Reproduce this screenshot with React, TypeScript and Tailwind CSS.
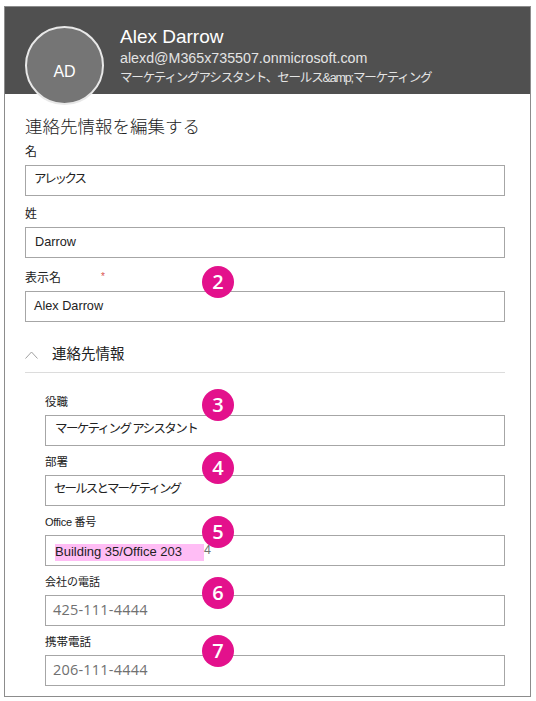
const font = "font-['Liberation_Sans','Noto_Sans_CJK_JP',sans-serif]"

interface FieldProps {
  label: string
  value?: string
  labelClass?: string
  inputClass: string
  children?: React.ReactNode
}

function Field({ label, value, labelClass = "text-[12px]", inputClass, children }: FieldProps) {
  return (
    <div>
      <div className={`mb-[4px] leading-[18px] text-[#222] ${labelClass}`}>{label}</div>
      <div className={`flex h-[31px] items-center border border-[#a6a6a6] bg-white text-[#222] ${inputClass}`}>
        {children ?? value}
      </div>
    </div>
  )
}

function Badge({ n, className }: { n: number; className: string }) {
  return (
    <div className={`absolute left-[197px] flex h-[32px] w-[32px] items-center justify-center rounded-full bg-[#e3118c] font-['Open_Sans',sans-serif] text-[20px] font-semibold text-white ${className}`}>
      {n}
    </div>
  )
}

const phone = "pb-[1px] font-['Open_Sans',sans-serif] text-[14.5px] tracking-[0.2px] text-[#707070]"

export default function App() {
  return (
    <div className={`relative h-[701px] w-[536px] bg-white pl-[4px] pt-[6px] ${font}`}>
      <div className="relative h-[691px] w-[527px] border border-[#8c8c8c]">
        {/* header */}
        <div className="h-[87px] bg-[#505050] pl-[115px] pt-[19px] text-white">
          <div className="text-[19px] leading-[22px]">Alex Darrow</div>
          <div className="text-[14.25px] leading-[20px] text-[#e4e4e4]">alexd@M365x735507.onmicrosoft.com</div>
          <div className="whitespace-nowrap text-[12.5px] leading-[20px] tracking-[-1.15px] text-[#e4e4e4]">マーケティングアシスタント、セールス&amp;amp;マーケティング</div>
        </div>
        <div className="absolute left-[20px] top-[19px] flex h-[79px] w-[79px] items-center justify-center rounded-full border-2 border-[#e8e8e8] bg-[#757575] pt-[12px] text-[16px] text-white">
          AD
        </div>

        <div className="pl-[20px] pr-[25px]">
          <div className="pt-[21px] text-[17.5px] font-light leading-[24px] text-[#222]">連絡先情報を編集する</div>

          <div className="mt-[4px] flex flex-col">
            <Field label="名" value="アレックス" inputClass="pb-[3px] pl-[8px] text-[12.5px] tracking-[-2.3px]" />
            <div className="pt-[9px]">
              <Field label="姓" value="Darrow" inputClass="pl-[9px] text-[12.7px]" />
            </div>
            <div className="pt-[11px]">
              <Field label="表示名" value="Alex Darrow" inputClass="pl-[8px] text-[12.7px]" />
            </div>
          </div>

          {/* section header */}
          <div className="mt-[19px] flex h-[32px] items-center border-b border-[#dcdcdc] pb-[3px]">
            <svg width="13" height="8" viewBox="0 0 13 8" fill="none" stroke="#a0a0a0" strokeWidth="1">
              <path d="M0.5 7.5 L6.5 1 L12.5 7.5" />
            </svg>
            <span className="ml-[14px] text-[14.5px] text-[#222]">連絡先情報</span>
          </div>

          <div className="ml-[20px] mt-[20px] flex flex-col gap-[7px]">
            <Field label="役職" value="マーケティング アシスタント" labelClass="text-[11.5px]" inputClass="pb-[3px] pl-[9px] text-[12.5px] tracking-[-1.6px]" />
            <Field label="部署" value="セールスとマーケティング" labelClass="text-[11.5px]" inputClass="pb-[3px] pl-[8px] text-[12.5px] tracking-[-1.9px]" />
            <Field label="Office 番号" labelClass="text-[11px] tracking-[-0.3px]" inputClass="pl-[9px]">
              <span className="mt-[3px] flex h-[17px] w-[149px] items-center whitespace-nowrap bg-[#ffbdf5] text-[13px] text-[#222]">Building 35/Office 203</span>
              <span className="text-[12.5px] text-[#707070]">4</span>
            </Field>
            <Field label="会社の電話" value="425-111-4444" labelClass="text-[11px]" inputClass={`pl-[7px] ${phone}`} />
            <Field label="携帯電話" value="206-111-4444" labelClass="text-[11.5px]" inputClass={`pl-[7px] ${phone}`} />
          </div>
        </div>

        <span className="absolute left-[96px] top-[264px] text-[10px] leading-[12px] text-[#d9534f]">*</span>
        <Badge n={2} className="top-[259px]" />
        <Badge n={3} className="top-[382px]" />
        <Badge n={4} className="top-[445px]" />
        <Badge n={5} className="top-[509px]" />
        <Badge n={6} className="top-[570px]" />
        <Badge n={7} className="top-[628px]" />
      </div>
    </div>
  )
}
